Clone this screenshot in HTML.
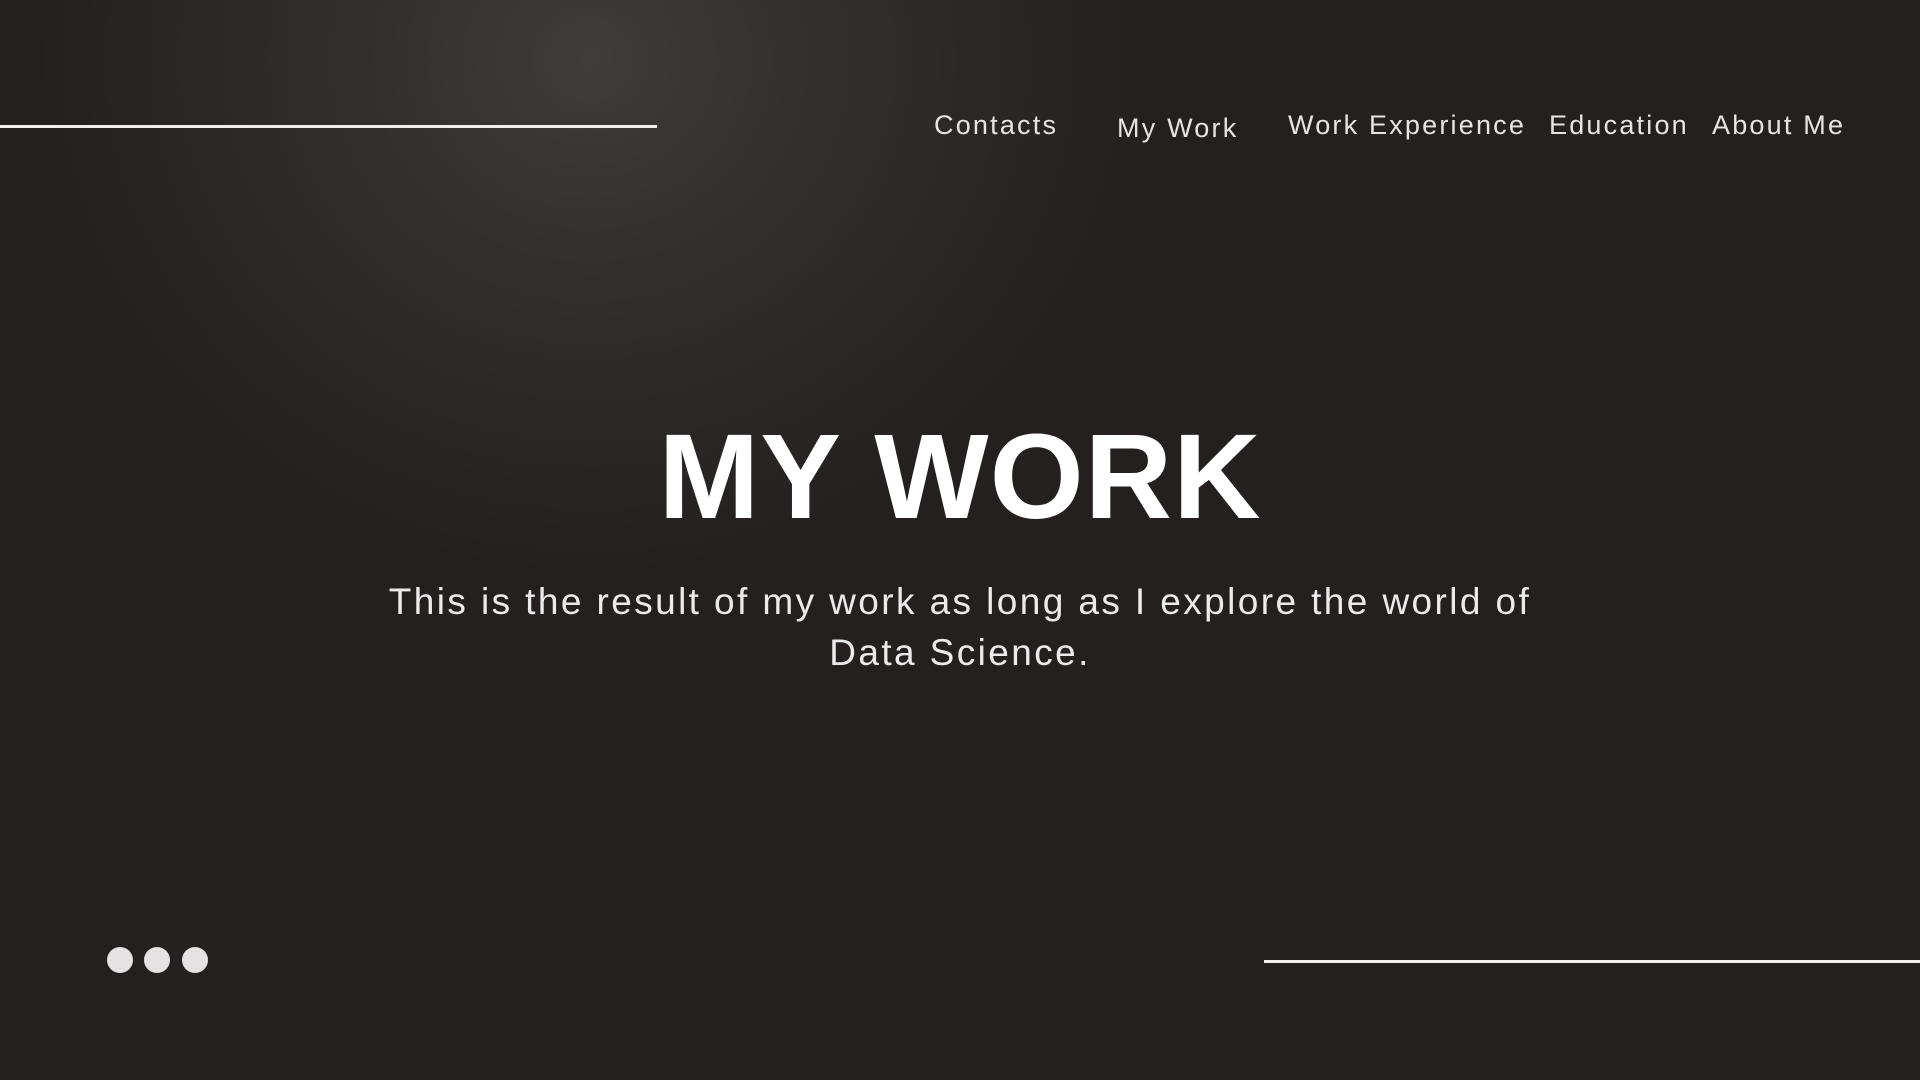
<!DOCTYPE html>
<html><head><meta charset="utf-8"><style>
html,body{margin:0;padding:0;width:1920px;height:1080px;overflow:hidden}
body{background:#242020;position:relative;font-family:"Liberation Sans",sans-serif;color:#e8e6e6}
.glow{position:absolute;left:0;top:0;width:1920px;height:1080px;background:radial-gradient(ellipse 560px 520px at 590px 60px,#403c3c 0%,#332f2f 40%,rgba(36,32,32,0) 100%)}
.line{position:absolute;height:3px;background:#f0eeee}
.nav{position:absolute;font-size:27px;top:110px;letter-spacing:2.2px;font-weight:300;color:#e6e4e4}
h1{position:absolute;left:0;width:1920px;text-align:center;top:416px;margin:0;font-size:121px;font-weight:bold;color:#fff;letter-spacing:1px;line-height:1}
.sub{position:absolute;left:0;width:1920px;text-align:center;top:576px;font-size:37px;line-height:51px;letter-spacing:2.4px;color:#ecebeb}
.dot{position:absolute;top:947px;width:26px;height:26px;border-radius:50%;background:#e4e2e2}
</style></head><body>
<div class="glow"></div>
<div class="line" style="left:0;top:125px;width:657px"></div>
<div class="line" style="left:1264px;top:960px;width:656px"></div>
<div class="nav" style="left:934px">Contacts</div>
<div class="nav" style="left:1117px;top:113px">My Work</div>
<div class="nav" style="left:1288px">Work Experience</div>
<div class="nav" style="left:1549px">Education</div>
<div class="nav" style="left:1712px">About Me</div>
<h1>MY WORK</h1>
<div class="sub">This is the result of my work as long as I explore the world of<br>Data Science.</div>
<div class="dot" style="left:107px"></div>
<div class="dot" style="left:144px"></div>
<div class="dot" style="left:182px"></div>
</body></html>
